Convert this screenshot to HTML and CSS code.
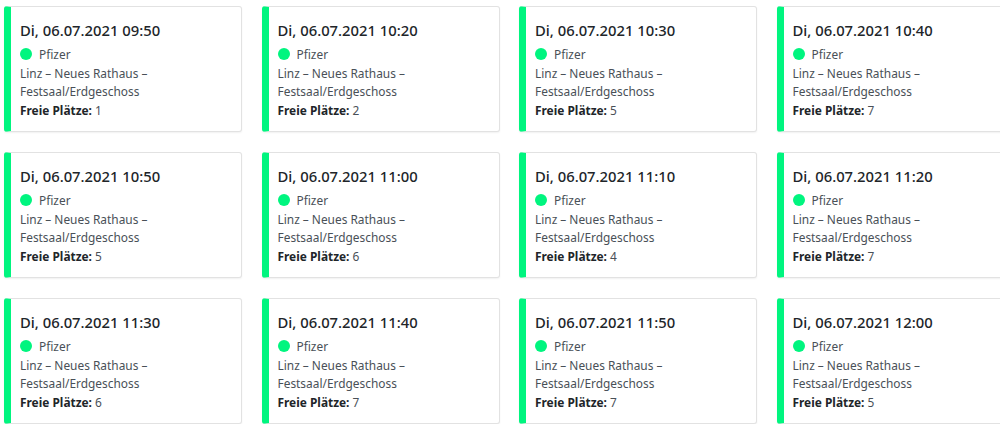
FILE: index.html
```html
<!DOCTYPE html>
<html lang="de">
<head>
<meta charset="utf-8">
<title>Termine</title>
<link rel="stylesheet" href="styles.css">
</head>
<body>
<div class="grid">
  <div class="card"><div class="title">Di, 06.07.2021 09:50</div><div class="vaccine"><span class="dot"></span>Pfizer</div><div class="place">Linz – Neues Rathaus – Festsaal/Erdgeschoss</div><div class="seats"><b>Freie Plätze:</b> 1</div></div>
  <div class="card"><div class="title">Di, 06.07.2021 10:20</div><div class="vaccine"><span class="dot"></span>Pfizer</div><div class="place">Linz – Neues Rathaus – Festsaal/Erdgeschoss</div><div class="seats"><b>Freie Plätze:</b> 2</div></div>
  <div class="card"><div class="title">Di, 06.07.2021 10:30</div><div class="vaccine"><span class="dot"></span>Pfizer</div><div class="place">Linz – Neues Rathaus – Festsaal/Erdgeschoss</div><div class="seats"><b>Freie Plätze:</b> 5</div></div>
  <div class="card"><div class="title">Di, 06.07.2021 10:40</div><div class="vaccine"><span class="dot"></span>Pfizer</div><div class="place">Linz – Neues Rathaus – Festsaal/Erdgeschoss</div><div class="seats"><b>Freie Plätze:</b> 7</div></div>
  <div class="card"><div class="title">Di, 06.07.2021 10:50</div><div class="vaccine"><span class="dot"></span>Pfizer</div><div class="place">Linz – Neues Rathaus – Festsaal/Erdgeschoss</div><div class="seats"><b>Freie Plätze:</b> 5</div></div>
  <div class="card"><div class="title">Di, 06.07.2021 11:00</div><div class="vaccine"><span class="dot"></span>Pfizer</div><div class="place">Linz – Neues Rathaus – Festsaal/Erdgeschoss</div><div class="seats"><b>Freie Plätze:</b> 6</div></div>
  <div class="card"><div class="title">Di, 06.07.2021 11:10</div><div class="vaccine"><span class="dot"></span>Pfizer</div><div class="place">Linz – Neues Rathaus – Festsaal/Erdgeschoss</div><div class="seats"><b>Freie Plätze:</b> 4</div></div>
  <div class="card"><div class="title">Di, 06.07.2021 11:20</div><div class="vaccine"><span class="dot"></span>Pfizer</div><div class="place">Linz – Neues Rathaus – Festsaal/Erdgeschoss</div><div class="seats"><b>Freie Plätze:</b> 7</div></div>
  <div class="card"><div class="title">Di, 06.07.2021 11:30</div><div class="vaccine"><span class="dot"></span>Pfizer</div><div class="place">Linz – Neues Rathaus – Festsaal/Erdgeschoss</div><div class="seats"><b>Freie Plätze:</b> 6</div></div>
  <div class="card"><div class="title">Di, 06.07.2021 11:40</div><div class="vaccine"><span class="dot"></span>Pfizer</div><div class="place">Linz – Neues Rathaus – Festsaal/Erdgeschoss</div><div class="seats"><b>Freie Plätze:</b> 7</div></div>
  <div class="card"><div class="title">Di, 06.07.2021 11:50</div><div class="vaccine"><span class="dot"></span>Pfizer</div><div class="place">Linz – Neues Rathaus – Festsaal/Erdgeschoss</div><div class="seats"><b>Freie Plätze:</b> 7</div></div>
  <div class="card"><div class="title">Di, 06.07.2021 12:00</div><div class="vaccine"><span class="dot"></span>Pfizer</div><div class="place">Linz – Neues Rathaus – Festsaal/Erdgeschoss</div><div class="seats"><b>Freie Plätze:</b> 5</div></div>
</div>
</body>
</html>
```
FILE: styles.css
```css
html, body {
  margin: 0;
  padding: 0;
  background: #ffffff;
  overflow: hidden;
}
body {
  font-family: "Noto Sans", "Open Sans", sans-serif;
  color: #212529;
}
.grid {
  display: grid;
  grid-template-columns: repeat(4, 238px);
  column-gap: 19.5px;
  row-gap: 20px;
  padding: 6px 0 0 4px;
  width: 1100px;
}
.card {
  box-sizing: border-box;
  height: 126px;
  border: 1px solid #e2e2e2;
  border-left: 7px solid #00f57f;
  border-radius: 3px;
  box-shadow: 0 1px 2px rgba(0, 0, 0, 0.06);
  padding: 11px 10px 0 9px;
  background: #fff;
}
.title {
  font-size: 14.8px;
  font-weight: 500;
  line-height: 24px;
  color: #212529;
  margin-bottom: 3px;
}
.vaccine, .place, .seats {
  font-size: 11.9px;
  line-height: 18.7px;
  color: #495057;
}
.vaccine {
  display: flex;
  align-items: center;
}
.dot {
  width: 12px;
  height: 12px;
  border-radius: 50%;
  background: #00f57f;
  margin-right: 7px;
  flex: none;
}
.seats b {
  color: #212529;
  font-weight: 700;
}
```
